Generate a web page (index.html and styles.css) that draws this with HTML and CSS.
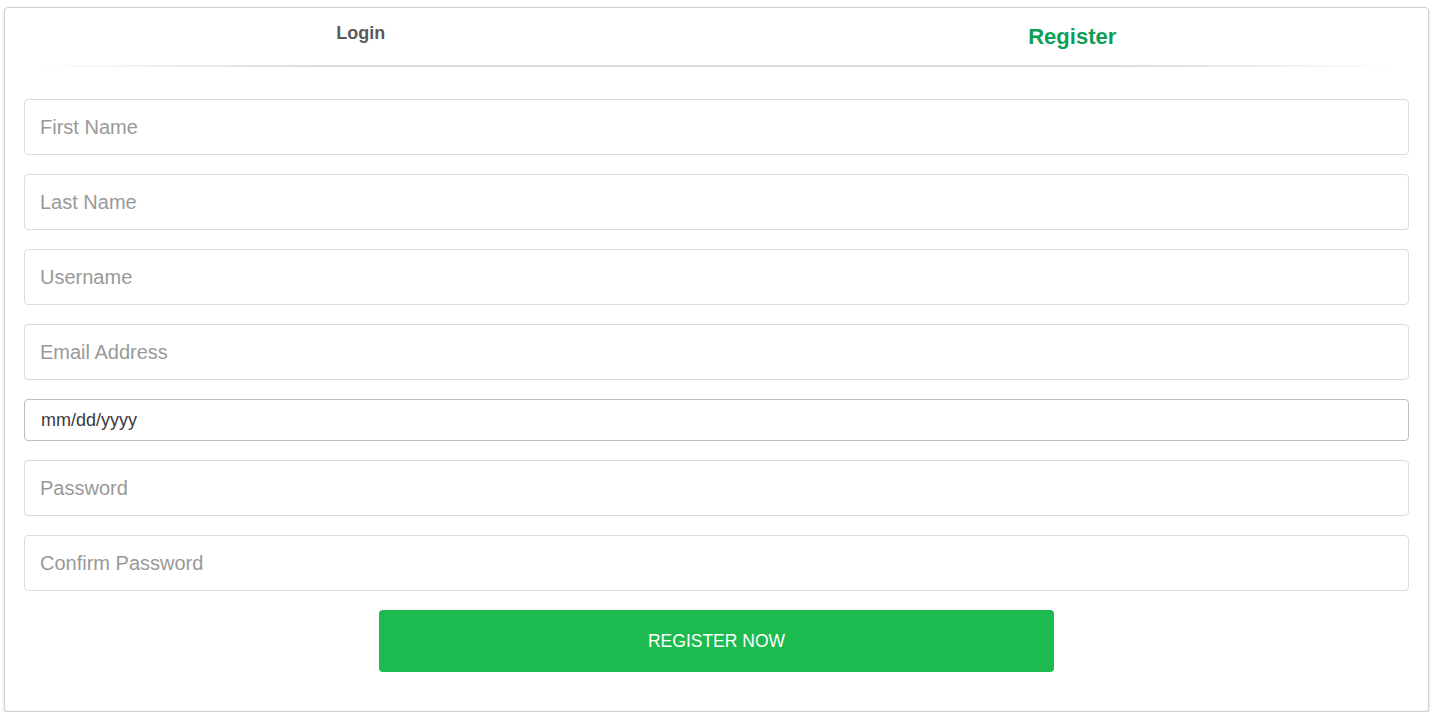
FILE: index.html
```html
<!DOCTYPE html>
<html lang="en">
<head>
<meta charset="utf-8">
<title>Register</title>
<link rel="stylesheet" href="styles.css">
</head>
<body>
<div class="card">
  <div class="tabs">
    <div class="tab tab-login">Login</div>
    <div class="tab tab-register">Register</div>
  </div>
  <div class="divider"></div>
  <form class="form">
    <input class="field" type="text" placeholder="First Name">
    <input class="field" type="text" placeholder="Last Name">
    <input class="field" type="text" placeholder="Username">
    <input class="field" type="text" placeholder="Email Address">
    <input class="field field-date" type="text" placeholder="mm/dd/yyyy">
    <input class="field" type="password" placeholder="Password">
    <input class="field" type="password" placeholder="Confirm Password">
    <button class="submit" type="button">REGISTER NOW</button>
  </form>
</div>
</body>
</html>
```
FILE: styles.css
```css
* { box-sizing: border-box; }
html, body { margin: 0; padding: 0; background: #fff; }
body {
  font-family: "Liberation Sans", Arial, sans-serif;
  padding: 7px 8px 0 4px;
}
.card {
  width: 1425px;
  height: 705px;
  border: 1px solid #cfcfcf;
  border-radius: 4px;
  box-shadow: 0 2px 3px rgba(0,0,0,0.18);
  background: #fff;
  padding: 0 19px 0 19px;
}
.tabs {
  display: flex;
  margin: 0 -19px;
  height: 57px;
}
.tab {
  flex: 1;
  text-align: center;
  font-weight: bold;
}
.tab-login {
  color: #5a5a5a;
  font-size: 18px;
  padding-top: 15px;
}
.tab-register {
  color: #0f9d58;
  font-size: 22px;
  padding-top: 16px;
}
.divider {
  height: 2px;
  margin: 0 10px;
  background: linear-gradient(to right, rgba(220,220,220,0) 0%, #dcdcdc 20%, #dcdcdc 80%, rgba(220,220,220,0) 100%);
}
.form {
  display: flex;
  flex-direction: column;
  gap: 19px;
  padding-top: 32px;
}
.field {
  display: block;
  width: 100%;
  height: 56px;
  border: 1px solid #dcdcdc;
  border-radius: 4px;
  padding: 0 15px;
  font-family: "Liberation Sans", Arial, sans-serif;
  font-size: 20px;
  color: #333;
  background: #fff;
  outline: none;
}
.field::placeholder { color: #999; }
.field-date {
  height: 42px;
  border-color: #bdbdbd;
  font-size: 18px;
  padding-left: 16px;
}
.field-date::placeholder { color: #3a3a3a; }
.submit {
  align-self: center;
  width: 675px;
  height: 62px;
  border: none;
  border-radius: 4px;
  background: #1dba4f;
  color: #fff;
  font-family: "Liberation Sans", Arial, sans-serif;
  font-size: 17.5px;
  cursor: pointer;
}
```
